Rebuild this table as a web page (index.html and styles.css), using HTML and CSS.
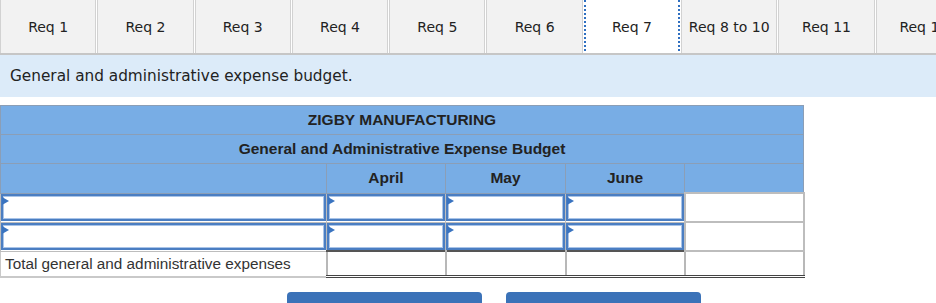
FILE: index.html
```html
<!DOCTYPE html>
<html>
<head>
<meta charset="utf-8">
<link rel="stylesheet" href="styles.css">
</head>
<body>
<div class="tabs">
  <div class="tab">Req 1</div>
  <div class="tab">Req 2</div>
  <div class="tab">Req 3</div>
  <div class="tab">Req 4</div>
  <div class="tab">Req 5</div>
  <div class="tab">Req 6</div>
  <div class="tab active">Req 7</div>
  <div class="tab">Req 8 to 10</div>
  <div class="tab">Req 11</div>
  <div class="tab">Req 12</div>
</div>
<div class="info">General and administrative expense budget.</div>
<table class="budget">
  <colgroup>
    <col class="c-label"><col class="c-m"><col class="c-m2"><col class="c-m"><col class="c-last">
  </colgroup>
  <tr class="head"><td colspan="5">ZIGBY MANUFACTURING</td></tr>
  <tr class="head"><td colspan="5">General and Administrative Expense Budget</td></tr>
  <tr class="head months"><td></td><td>April</td><td>May</td><td>June</td><td></td></tr>
  <tr class="entry">
    <td><div class="inp"></div></td>
    <td><div class="inp"></div></td>
    <td><div class="inp"></div></td>
    <td><div class="inp"></div></td>
    <td class="plain"></td>
  </tr>
  <tr class="entry">
    <td><div class="inp"></div></td>
    <td><div class="inp"></div></td>
    <td><div class="inp"></div></td>
    <td><div class="inp"></div></td>
    <td class="plain"></td>
  </tr>
  <tr class="total">
    <td class="tlabel">Total general and administrative expenses</td>
    <td class="tval"></td>
    <td class="tval"></td>
    <td class="tval"></td>
    <td class="tval"></td>
  </tr>
</table>
<div class="buttons">
  <div class="btn"></div>
  <div class="btn"></div>
</div>
</body>
</html>
```
FILE: styles.css
```css
html, body {
  margin: 0;
  padding: 0;
  background: #ffffff;
  overflow: hidden;
}
body {
  width: 936px;
  height: 303px;
}
.tabs {
  display: flex;
  height: 53px;
  border-bottom: 2px solid #c6c6c6;
  background: #ffffff;
  white-space: nowrap;
  overflow: hidden;
}
.tab {
  flex: 0 0 auto;
  width: 94.3px;
  height: 53px;
  margin-right: 1px;
  border-left: 1px solid #d2d2d2;
  border-right: 1px solid #d2d2d2;
  background: #f2f2f2;
  font-family: "DejaVu Sans", Verdana, sans-serif;
  font-size: 14px;
  color: #222;
  display: flex;
  align-items: center;
  justify-content: center;
  padding-top: 1px;
  box-sizing: border-box;
}
.tab {
  width: 96.3px;
}
.tab.active {
  background: #ffffff;
  height: 55px;
  margin-bottom: -2px;
  border-left: 2px dotted #2f6fc0;
  border-right: 2px dotted #2f6fc0;
  border-bottom: 2px dotted #2f6fc0;
  position: relative;
  z-index: 1;
}
.info {
  height: 42px;
  background: #dcebf9;
  font-family: "DejaVu Sans", Verdana, sans-serif;
  font-size: 15.3px;
  color: #222;
  padding-left: 10px;
  display: flex;
  align-items: center;
  margin-bottom: 8px;
}
.budget {
  border-collapse: collapse;
  table-layout: fixed;
  width: 803px;
  font-family: "Liberation Sans", Arial, sans-serif;
  font-size: 15.3px;
}
.c-label { width: 326px; }
.c-m { width: 119px; }
.c-m2 { width: 120px; }
.c-last { width: 119px; }
.budget td {
  padding: 0;
  height: 28px;
}
.head td {
  background: #78ade5;
  border: 1px solid #8b9eb6;
  font-weight: bold;
  font-size: 15.5px;
  color: #222;
  text-align: center;
  vertical-align: middle;
}
.entry td {
  border: 1px solid #bdbdbd;
  background: #ffffff;
  vertical-align: top;
  height: 27px;
}
.entry td.plain {
  border: 2px solid #bdbdbd;
}
.inp {
  position: relative;
  height: 27px;
  box-sizing: border-box;
  border: 2px solid #4b7ec2;
  box-shadow: inset 0 0 0 1px #a9c4e8;
  background: #ffffff;
}
.inp::before {
  content: "";
  position: absolute;
  left: -1px;
  top: 1px;
  border-left: 7px solid #3a74c0;
  border-top: 4px solid transparent;
  border-bottom: 4px solid transparent;
}
.total td {
  height: 23px;
}
.tlabel {
  border-left: 1px solid #c9c9c9;
  border-bottom: 2px solid #c9c9c9;
  color: #333;
  padding-left: 4px !important;
  vertical-align: middle;
  white-space: nowrap;
}
.tval {
  border-top: 2px solid #555;
  border-bottom: 3px double #444;
  border-left: 2px solid #b8b8b8;
  border-right: 2px solid #b8b8b8;
}
.buttons {
  display: flex;
  gap: 24px;
  margin-left: 287px;
  margin-top: 14px;
}
.btn {
  width: 195px;
  height: 24px;
  background: #3b72b8;
  border-radius: 4px 4px 0 0;
}
```
